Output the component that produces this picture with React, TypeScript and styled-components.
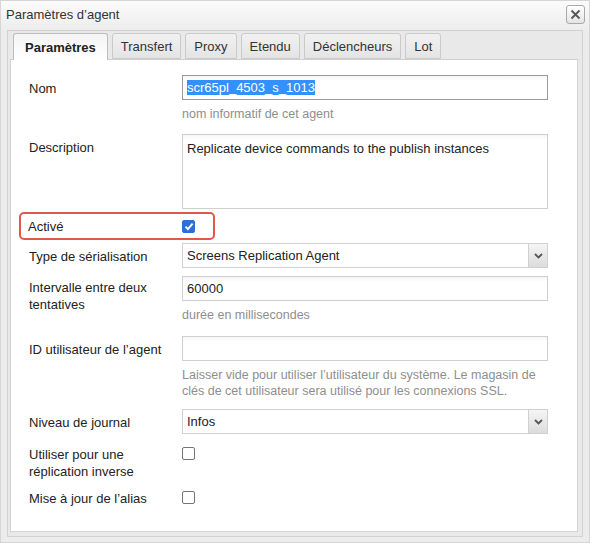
import styled, { createGlobalStyle } from "styled-components";

const GlobalStyle = createGlobalStyle`
  html, body {
    margin: 0;
    padding: 0;
    background: #f2f2f2;
  }
  * {
    box-sizing: border-box;
  }
`;

const Window = styled.div`
  width: 590px;
  height: 543px;
  display: flex;
  flex-direction: column;
  background: #ececec;
  border: 1px solid #d6d6d6;
  font-family: "Liberation Sans", Arial, sans-serif;
  font-size: 13px;
  color: #222;
`;

const TitleBar = styled.div`
  height: 29px;
  display: flex;
  align-items: center;
  justify-content: space-between;
  padding: 0 4px 2px 5px;
  background: linear-gradient(#fbfbfb, #ededed);
  color: #333;
`;

const CloseButton = styled.button`
  width: 19px;
  height: 19px;
  padding: 0;
  display: flex;
  align-items: center;
  justify-content: center;
  border: 1px solid #a9a9a9;
  border-radius: 3px;
  background: linear-gradient(#ffffff, #e4e4e4);
  color: #555;
`;

const Panel = styled.div`
  flex: 1;
  margin: 0 6px 5px 6px;
  padding: 2px 4px 4px 2px;
  display: flex;
  flex-direction: column;
  border: 1px solid #d2d2d2;
  background: #e9e9e9;
`;

const TabStrip = styled.div`
  display: flex;
  gap: 4px;
  padding-left: 3px;
  height: 27px;
  align-items: flex-end;
  border-bottom: 1px solid #cfcfcf;
`;

const Tab = styled.div<{ $active?: boolean }>`
  height: ${({ $active }) => ($active ? "27px" : "26px")};
  margin-bottom: ${({ $active }) => ($active ? "-1px" : "0")};
  padding: 0 ${({ $active }) => ($active ? "11px" : "8px")};
  display: flex;
  align-items: center;
  border: 1px solid ${({ $active }) => ($active ? "#bdbdbd" : "#cacaca")};
  border-bottom: ${({ $active }) => ($active ? "none" : "1px solid #cacaca")};
  border-radius: 3px 3px 0 0;
  background: ${({ $active }) =>
    $active ? "linear-gradient(#f4f4f4, #ffffff)" : "linear-gradient(#f1f1f1, #e4e4e4)"};
  font-weight: ${({ $active }) => ($active ? "bold" : "normal")};
  color: ${({ $active }) => ($active ? "#222" : "#333")};
  font-size: 13px;
`;

const Content = styled.div`
  flex: 1;
  background: #fff;
  border: 1px solid #d4d4d4;
  border-top: none;
  padding: 15px 0 0 18px;
  display: flex;
  flex-direction: column;
`;

const Row = styled.div<{ $top?: number }>`
  display: grid;
  grid-template-columns: 153px 366px;
  margin-top: ${({ $top }) => $top ?? 0}px;
`;

const Label = styled.div<{ $pad?: number }>`
  padding-top: ${({ $pad }) => $pad ?? 5}px;
  line-height: 17px;
  color: #222;
`;

const Field = styled.div`
  display: flex;
  flex-direction: column;
`;

const TextInput = styled.div<{ $focus?: boolean }>`
  height: 25px;
  padding: 0 4px;
  display: flex;
  align-items: center;
  border: 1px solid ${({ $focus }) => ($focus ? "#9a9a9a" : "#cfcfcf")};
  background: linear-gradient(#f6f6f6, #ffffff 5px);
  color: #222;
`;

const Selected = styled.span`
  background: #3390ff;
  color: #fff;
`;

const TextArea = styled.div`
  height: 75px;
  padding: 5px 4px;
  border: 1px solid #cfcfcf;
  background: linear-gradient(#f6f6f6, #ffffff 5px);
  line-height: 17px;
`;

const Hint = styled.div`
  margin-top: 6px;
  color: #8e8e8e;
  font-size: 12.5px;
  line-height: 16px;
`;

const Select = styled.div`
  height: 25px;
  display: flex;
  border: 1px solid #d0d0d0;
  background: #fff;
`;

const SelectValue = styled.div`
  flex: 1;
  padding: 0 4px;
  display: flex;
  align-items: center;
`;

const SelectArrow = styled.div`
  width: 19px;
  display: flex;
  align-items: center;
  justify-content: center;
  border-left: 1px solid #d0d0d0;
  background: linear-gradient(#f5f5f5, #dcdcdc);
  color: #555;
`;

const Highlight = styled.div`
  margin-left: -10px;
  width: 196px;
  height: 28px;
  padding-left: 7px;
  display: grid;
  grid-template-columns: 154px auto;
  align-items: center;
  border: 2px solid #e2574c;
  border-radius: 5px;
`;

const Check = styled.div<{ $checked?: boolean }>`
  width: 13px;
  height: 13px;
  border-radius: 2px;
  display: flex;
  align-items: center;
  justify-content: center;
  border: 1px solid ${({ $checked }) => ($checked ? "#2f6ed8" : "#767676")};
  background: ${({ $checked }) => ($checked ? "#2f6ed8" : "#fff")};
`;

const CheckCell = styled.div<{ $pad?: number }>`
  padding-top: ${({ $pad }) => $pad ?? 0}px;
`;

const Chevron = () => (
  <svg width="9" height="6" viewBox="0 0 9 6">
    <path d="M1 1l3.5 3.5L8 1" fill="none" stroke="#555" strokeWidth="1.8" />
  </svg>
);

const Tick = () => (
  <svg width="10" height="9" viewBox="0 0 10 9">
    <path d="M1.5 4.6l2.4 2.4L8.6 1.6" fill="none" stroke="#fff" strokeWidth="1.9" />
  </svg>
);

const tabs = ["Paramètres", "Transfert", "Proxy", "Etendu", "Déclencheurs", "Lot"];

export default function App() {
  return (
    <>
      <GlobalStyle />
      <Window>
        <TitleBar>
          <span>Paramètres d’agent</span>
          <CloseButton>
            <svg width="11" height="11" viewBox="0 0 11 11">
              <path d="M1.5 1.5l8 8M9.5 1.5l-8 8" stroke="#555" strokeWidth="1.8" />
            </svg>
          </CloseButton>
        </TitleBar>
        <Panel>
          <TabStrip>
            {tabs.map((t, i) => (
              <Tab key={t} $active={i === 0}>
                {t}
              </Tab>
            ))}
          </TabStrip>
          <Content>
            <Row>
              <Label>Nom</Label>
              <Field>
                <TextInput $focus>
                  <Selected>scr65pl_4503_s_1013</Selected>
                </TextInput>
                <Hint>nom informatif de cet agent</Hint>
              </Field>
            </Row>

            <Row $top={12}>
              <Label>Description</Label>
              <TextArea>Replicate device commands to the publish instances</TextArea>
            </Row>

            <Row $top={3}>
              <Highlight>
                <span>Activé</span>
                <Check $checked>
                  <Tick />
                </Check>
              </Highlight>
            </Row>

            <Row $top={3}>
              <Label>Type de sérialisation</Label>
              <Select>
                <SelectValue>Screens Replication Agent</SelectValue>
                <SelectArrow>
                  <Chevron />
                </SelectArrow>
              </Select>
            </Row>

            <Row $top={8}>
              <Label $pad={3}>
                Intervalle entre deux
                <br />
                tentatives
              </Label>
              <Field>
                <TextInput>60000</TextInput>
                <Hint>durée en millisecondes</Hint>
              </Field>
            </Row>

            <Row $top={13}>
              <Label>ID utilisateur de l’agent</Label>
              <Field>
                <TextInput />
                <Hint>
                  Laisser vide pour utiliser l’utilisateur du système. Le magasin de
                  <br />
                  clés de cet utilisateur sera utilisé pour les connexions SSL.
                </Hint>
              </Field>
            </Row>

            <Row $top={10}>
              <Label>Niveau de journal</Label>
              <Select>
                <SelectValue>Infos</SelectValue>
                <SelectArrow>
                  <Chevron />
                </SelectArrow>
              </Select>
            </Row>

            <Row $top={12}>
              <Label $pad={0}>
                Utiliser pour une
                <br />
                réplication inverse
              </Label>
              <CheckCell $pad={1}>
                <Check />
              </CheckCell>
            </Row>

            <Row $top={10}>
              <Label $pad={0}>Mise à jour de l’alias</Label>
              <CheckCell $pad={1}>
                <Check />
              </CheckCell>
            </Row>
          </Content>
        </Panel>
      </Window>
    </>
  );
}
